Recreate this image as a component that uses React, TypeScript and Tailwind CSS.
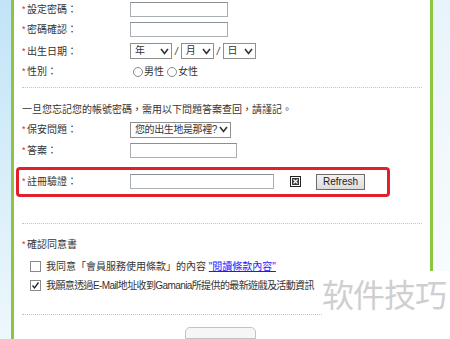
import React from "react";

function Label({ text }: { text: string }) {
  return (
    <div className="flex w-[108px] shrink-0 items-center">
      <span className="w-[5px] text-[9px] leading-none text-[#e8242f]">*</span>
      <span>{text}：</span>
    </div>
  );
}

function Input({ w }: { w: string }) {
  return (
    <div
      className={`h-[15px] border border-[#a9aeb3] border-t-[#8a8f94] bg-white ${w}`}
    />
  );
}

function Chevron() {
  return (
    <svg width="9" height="7" viewBox="0 0 9 7" className="shrink-0">
      <polyline
        points="1,1 4.5,5.5 8,1"
        fill="none"
        stroke="#333"
        strokeWidth="1.6"
      />
    </svg>
  );
}

function Select({ text, w }: { text: string; w: string }) {
  return (
    <div
      className={`flex h-[16px] items-center justify-between border border-[#8f8f8f] bg-white pl-[4px] pr-[2px] ${w}`}
    >
      <span className="whitespace-nowrap leading-none tracking-[-0.4px]">
        {text}
      </span>
      <Chevron />
    </div>
  );
}

function Radio({ text }: { text: string }) {
  return (
    <div className="flex items-center">
      <span className="mr-[1px] h-[10px] w-[10px] rounded-full border border-[#8a8a8a] bg-white" />
      <span>{text}</span>
    </div>
  );
}

function Check({ checked }: { checked?: boolean }) {
  return (
    <div className="mr-[5px] flex h-[11px] w-[11px] shrink-0 items-center justify-center border border-[#8a8a8a] bg-white">
      {checked && (
        <svg width="9" height="9" viewBox="0 0 9 9">
          <polyline
            points="1.5,4.5 3.5,7 7.5,1.5"
            fill="none"
            stroke="#222"
            strokeWidth="1.3"
          />
        </svg>
      )}
    </div>
  );
}

function Dotted() {
  return <div className="border-t border-dotted border-[#c4c4c4]" />;
}

function BrokenImage() {
  return (
    <svg width="11" height="11" viewBox="0 0 11 11" className="shrink-0">
      <rect x="0.5" y="0.5" width="10" height="10" fill="#fff" stroke="#222" />
      <rect x="2" y="2" width="7" height="7" fill="#3a3a3a" />
      <path d="M3.5 3.5 L7.5 7.5 M7.5 3.5 L3.5 7.5" stroke="#fff" strokeWidth="1.2" />
    </svg>
  );
}

export default function App() {
  return (
    <div className="relative flex h-[339px] w-[450px] overflow-hidden bg-white font-['Liberation_Sans','Noto_Sans_CJK_TC',sans-serif] text-[10px] text-[#333]">
      <div className="w-[11px] shrink-0 bg-gradient-to-b from-[#c2e4f7] via-[#d7eefa] to-[#eef7fc]" />
      <div className="w-[3px] shrink-0 bg-[#8cc63f]" />

      <main className="flex w-[416px] shrink-0 flex-col px-[8px]">
        <div className="flex h-[20px] items-center">
          <Label text="設定密碼" />
          <Input w="w-[98px]" />
        </div>
        <div className="flex h-[22px] items-center">
          <Label text="密碼確認" />
          <Input w="w-[98px]" />
        </div>
        <div className="flex h-[22px] items-center">
          <Label text="出生日期" />
          <div className="flex items-center">
            <Select text="年" w="w-[42px]" />
            <span className="mx-[3px] italic">/</span>
            <Select text="月" w="w-[33px]" />
            <span className="mx-[3px] italic">/</span>
            <Select text="日" w="w-[33px]" />
          </div>
        </div>
        <div className="flex h-[20px] items-center">
          <Label text="性別" />
          <div className="flex items-center gap-[3px] pl-[3px]">
            <Radio text="男性" />
            <Radio text="女性" />
          </div>
        </div>

        <div className="mt-[6px]">
          <Dotted />
        </div>

        <p className="mt-[12px] h-[20px] leading-[20px]">
          一旦您忘記您的帳號密碼，需用以下問題答案查回，請謹記。
        </p>
        <div className="flex h-[20px] items-center">
          <Label text="保安問題" />
          <Select text="您的出生地是那裡?" w="w-[101px]" />
        </div>
        <div className="flex h-[22px] items-center">
          <Label text="答案" />
          <Input w="w-[107px]" />
        </div>

        <div className="ml-[-6px] mt-[6px] flex h-[31px] w-[374px] items-center rounded-[4px] border-[3px] border-[#e2202c] pl-[3px]">
          <Label text="註冊驗證" />
          <Input w="w-[144px]" />
          <div className="ml-[16px]">
            <BrokenImage />
          </div>
          <button className="ml-[15px] flex h-[16px] w-[49px] items-center justify-center border border-[#6b6b6b] bg-gradient-to-b from-[#f2f2f2] to-[#dcdcdc] font-['Liberation_Sans',sans-serif] text-[10px] text-[#222]">
            Refresh
          </button>
        </div>

        <div className="mt-[26px]">
          <Dotted />
        </div>

        <div className="mt-[11px] flex h-[20px] items-center">
          <span className="w-[5px] text-[9px] leading-none text-[#e8242f]">*</span>
          <span>確認同意書</span>
        </div>
        <div className="mt-[2px] flex h-[20px] items-center pl-[8px]">
          <Check />
          <span>
            我同意「會員服務使用條款」的內容{" "}
            <a className="text-[#1a1aff] underline">"閱讀條款內容"</a>
          </span>
        </div>
        <div className="flex h-[20px] items-center pl-[8px]">
          <Check checked />
          <span className="whitespace-nowrap tracking-[-0.6px]">
            我願意透過E-Mail地址收到Gamania所提供的最新遊戲及活動資訊
          </span>
        </div>

        <div className="mt-[19px]">
          <Dotted />
        </div>

        <div className="mt-[12px] flex justify-center pr-[4px]">
          <div className="h-[12px] w-[71px] rounded-t-[5px] border border-[#c2c2c2] bg-[#f6f6f6]" />
        </div>
      </main>

      <div className="w-[3px] shrink-0 bg-[#8cc63f]" />
      <div className="flex-1 bg-gradient-to-b from-[#e8f3fb] via-[#f3f8fd] to-[#fbfdff]" />

      <div className="absolute bottom-0 right-0 flex h-[68px] w-[128px] items-start bg-white pt-[2px]">
        <span className="font-['Noto_Sans_CJK_SC',sans-serif] text-[32px] leading-[40px] tracking-[-1px] text-[#cfcfcf]">
          软件技巧
        </span>
      </div>
    </div>
  );
}
